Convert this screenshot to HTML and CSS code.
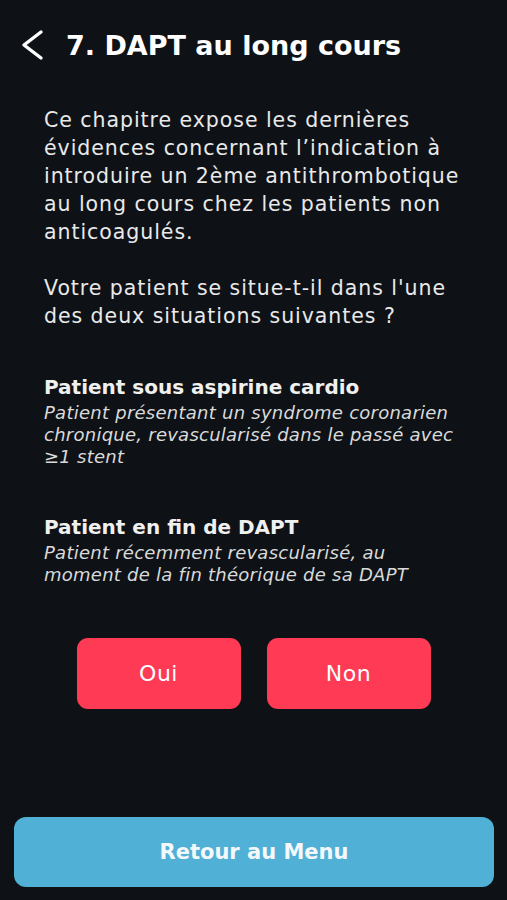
FILE: index.html
```html
<!DOCTYPE html>
<html lang="fr">
<head>
<meta charset="utf-8">
<link rel="stylesheet" href="styles.css">
</head>
<body>
<div class="screen">
  <header class="header">
    <svg class="back" width="24" height="32" viewBox="0 0 24 32"><path d="M21 3 L4 16 L21 29" fill="none" stroke="#fff" stroke-width="3.4" stroke-linecap="round" stroke-linejoin="round"/></svg>
    <h1 class="title">7. DAPT au long cours</h1>
  </header>
  <main class="content">
    <p class="intro">Ce chapitre expose les dernières<br>évidences concernant l’indication à<br>introduire un 2ème antithrombotique<br>au long cours chez les patients non<br>anticoagulés.</p>
    <p class="intro">Votre patient se situe-t-il dans l'une<br>des deux situations suivantes ?</p>
    <section class="case">
      <h2 class="case-title">Patient sous aspirine cardio</h2>
      <p class="case-desc">Patient présentant un syndrome coronarien<br>chronique, revascularisé dans le passé avec<br>≥1 stent</p>
    </section>
    <section class="case">
      <h2 class="case-title">Patient en fin de DAPT</h2>
      <p class="case-desc">Patient récemment revascularisé, au<br>moment de la fin théorique de sa DAPT</p>
    </section>
    <div class="choices">
      <button class="choice">Oui</button>
      <button class="choice">Non</button>
    </div>
  </main>
  <footer class="footer">
    <button class="menu">Retour au Menu</button>
  </footer>
</div>
</body>
</html>
```
FILE: styles.css
```css
* { box-sizing: border-box; }
html, body { margin: 0; padding: 0; background: #0e1217; }
body { font-family: "DejaVu Sans", sans-serif; color: #f0f0f0; }
.screen { width: 507px; height: 900px; display: flex; flex-direction: column; }
.header { display: flex; align-items: center; height: 90px; padding: 0 0 0 20px; gap: 22px; }
.back { display: block; flex: none; }
.title { margin: 0; font-size: 27px; font-weight: 700; color: #fff; }
.content { flex: 1; padding: 16px 0 0 44px; }
.intro { margin: 0; font-size: 20.5px; line-height: 28px; font-weight: 400; letter-spacing: 0.95px; color: #e9e9e9; white-space: nowrap; }
.intro + .intro { margin-top: 28px; }
.case { margin-top: 44px; }
.case + .case { margin-top: 46px; }
.case-title { margin: 0; font-size: 20px; font-weight: 700; line-height: 26px; color: #f0f0f0; white-space: nowrap; }
.case-desc { margin: 2px 0 0; font-size: 18px; line-height: 22px; font-style: italic; letter-spacing: 0.25px; color: #dadada; white-space: nowrap; }
.choices { display: flex; justify-content: center; gap: 26px; margin-top: 52px; margin-left: -44px; }
.choice { width: 164px; height: 71px; border: none; border-radius: 11px; background: #fe3a55; color: #fff; font-family: inherit; font-size: 22px; font-weight: 400; letter-spacing: 0.5px; }
.footer { padding: 0 13px 13px 14px; }
.menu { width: 100%; height: 70px; border: none; border-radius: 12px; background: #50b0d6; color: #f4f8fb; font-family: inherit; font-size: 21px; font-weight: 700; }
```
